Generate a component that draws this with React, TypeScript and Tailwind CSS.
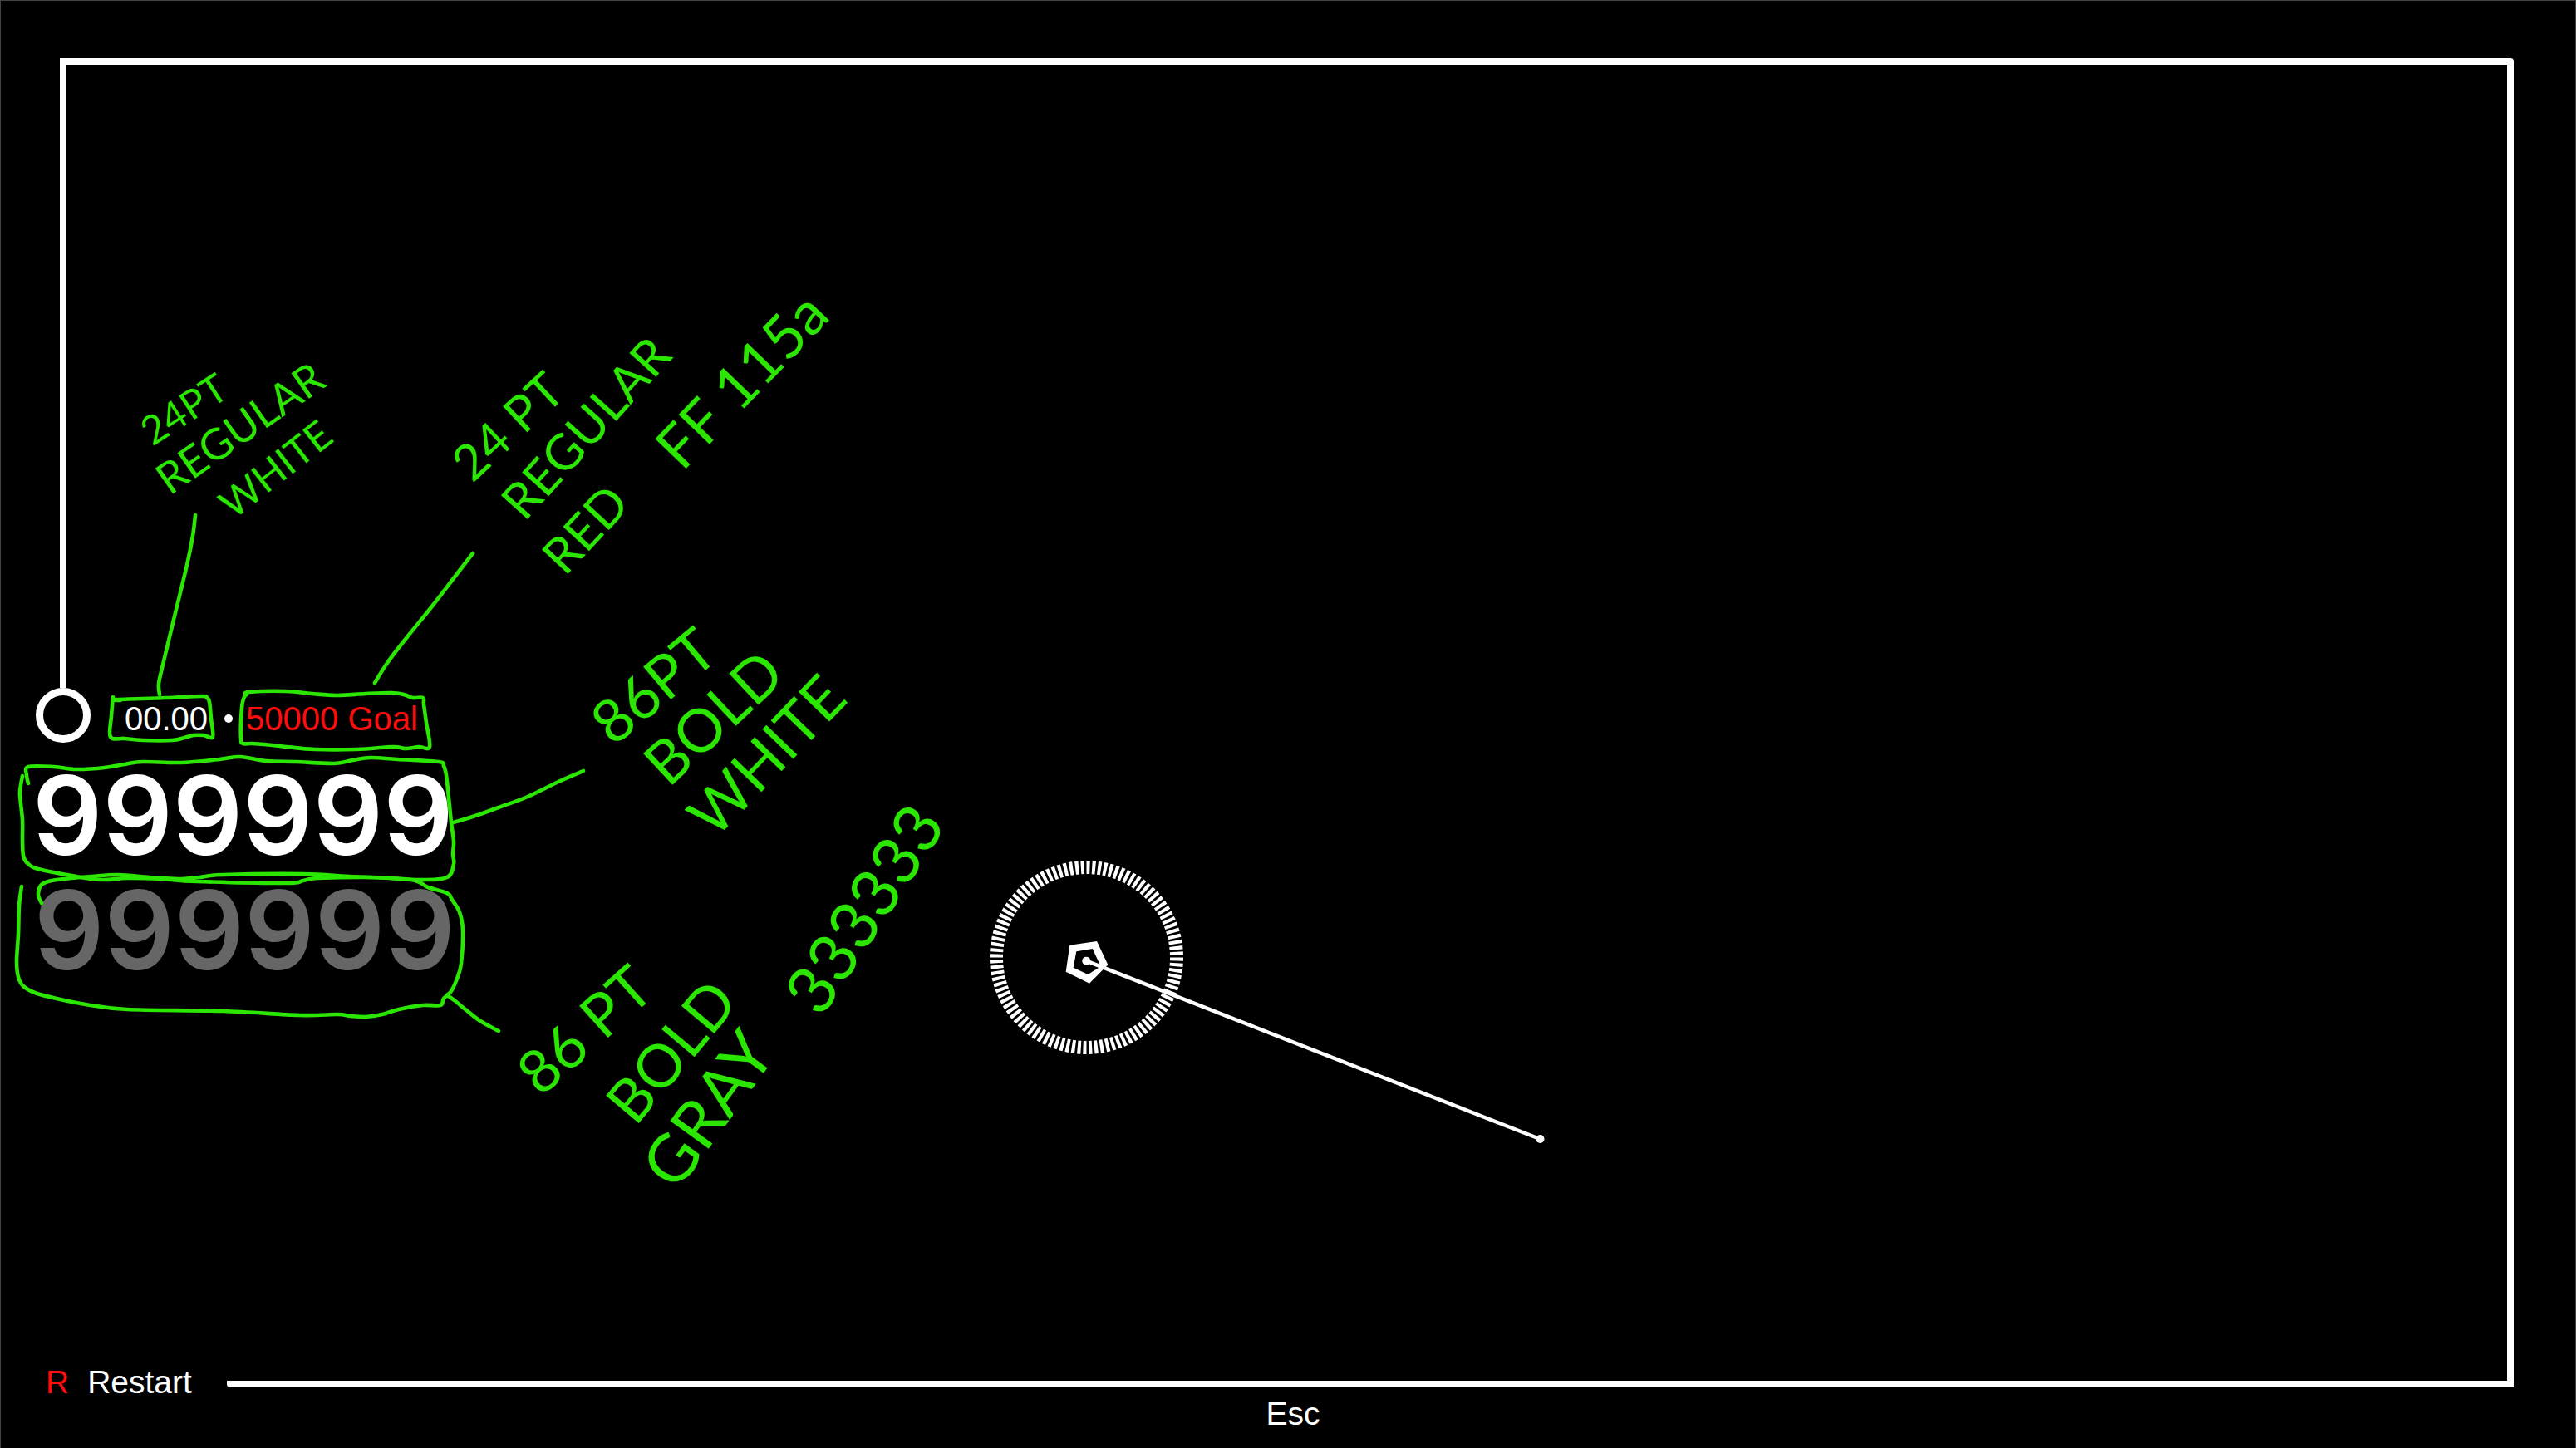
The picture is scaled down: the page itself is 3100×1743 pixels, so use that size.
import React from "react";

type Point = [number, number];

const timerBox: Point[] = [[136, 839], [134, 862], [133, 887], [150, 889], [172, 891], [207, 891], [222, 888], [233, 885], [245, 885], [256, 887], [254, 865], [252, 845], [249, 840], [243, 838], [199, 840], [140, 842], [145, 843]];
const goalBox: Point[] = [[297, 836], [299, 833], [344, 832], [375, 835], [406, 837], [440, 835], [471, 834], [486, 836], [497, 840], [509, 840], [510, 848], [513, 870], [517, 899], [504, 899], [488, 901], [473, 899], [429, 902], [379, 902], [345, 899], [318, 896], [303, 895], [292, 895], [290, 889], [290, 867], [292, 845], [296, 835]];
const scoreBox: Point[] = [[34, 943], [32, 933], [34, 923], [65, 923], [92, 926], [126, 924], [150, 920], [172, 917], [218, 918], [264, 914], [289, 911], [321, 916], [356, 917], [402, 919], [425, 915], [446, 912], [478, 914], [528, 917], [534, 922], [537, 933], [540, 960], [543, 990], [546, 1013], [545, 1028], [546, 1040], [538, 1056], [505, 1059], [450, 1056], [383, 1057], [365, 1060], [344, 1063], [237, 1061], [195, 1058], [153, 1057], [122, 1059], [92, 1055], [46, 1046], [33, 1039], [28, 1030], [27, 1010], [27, 987], [24, 957], [25, 945], [27, 934]];
const bestBox: Point[] = [[50, 1087], [46, 1077], [49, 1066], [58, 1061], [77, 1058], [110, 1055], [142, 1053], [180, 1056], [214, 1058], [240, 1056], [268, 1053], [364, 1052], [421, 1055], [494, 1059], [515, 1068], [538, 1075], [544, 1083], [553, 1098], [557, 1120], [555, 1160], [550, 1178], [543, 1193], [534, 1202], [530, 1210], [509, 1210], [480, 1215], [460, 1221], [440, 1224], [422, 1223], [406, 1221], [360, 1222], [268, 1217], [153, 1215], [103, 1209], [68, 1202], [42, 1195], [28, 1187], [22, 1176], [20, 1157], [22, 1125], [23, 1090], [26, 1067]];
const leaders: Point[][] = [
  [[235, 620], [232, 645], [225, 680], [208, 750], [196, 800], [191, 823], [192, 836]],
  [[569, 666], [549, 692], [519, 731], [489, 768], [466, 798], [451, 822]],
  [[546, 990], [575, 981], [600, 972], [635, 959], [672, 941], [702, 928]],
  [[538, 1198], [548, 1205], [560, 1215], [578, 1229], [600, 1241]],
];

// Catmull-Rom spline through the pen points, written as cubic Béziers.
function penPath(points: Point[]): string {
  let d = `M${points[0][0]} ${points[0][1]}`;
  for (let i = 0; i < points.length - 1; i++) {
    const a = points[Math.max(i - 1, 0)];
    const b = points[i];
    const c = points[i + 1];
    const e = points[Math.min(i + 2, points.length - 1)];
    d += `C${b[0] + (c[0] - a[0]) / 6} ${b[1] + (c[1] - a[1]) / 6} ${c[0] - (e[0] - b[0]) / 6} ${c[1] - (e[1] - b[1]) / 6} ${c[0]} ${c[1]}`;
  }
  return d;
}

function PenMarks() {
  return (
    <svg
      className="pointer-events-none absolute left-0 top-0 overflow-visible"
      width="720"
      height="1260"
      fill="none"
      stroke="#2ae600"
      strokeWidth="4.6"
      strokeLinecap="round"
      strokeLinejoin="round"
      aria-hidden="true"
    >
      {[timerBox, goalBox, scoreBox, bestBox, ...leaders].map((points, i) => (
        <path key={i} d={penPath(points)} />
      ))}
    </svg>
  );
}

const notes: { text: string; place: string }[] = [
  { text: "24PT", place: "left-[221px] top-[492px] rotate-[-33deg] text-[48px]" },
  { text: "REGULAR", place: "left-[288px] top-[514px] rotate-[-35deg] text-[52px]" },
  { text: "WHITE", place: "left-[331px] top-[564px] rotate-[-38deg] text-[48px]" },
  { text: "24 PT", place: "left-[610px] top-[512px] rotate-[-43deg] text-[60px]" },
  { text: "REGULAR", place: "left-[704px] top-[514px] rotate-[-48deg] text-[60px]" },
  { text: "RED", place: "left-[703px] top-[636px] rotate-[-47deg] text-[60px]" },
  { text: "FF 115a", place: "left-[891px] top-[456px] rotate-[-46deg] text-[72px]" },
  { text: "86PT", place: "left-[785px] top-[824px] rotate-[-40deg] text-[72px]" },
  { text: "BOLD", place: "left-[857px] top-[862px] rotate-[-43deg] text-[72px]" },
  { text: "WHITE", place: "left-[921px] top-[908px] rotate-[-46deg] text-[72px]" },
  { text: "86 PT", place: "left-[702px] top-[1238px] rotate-[-42deg] text-[72px]" },
  { text: "BOLD", place: "left-[806px] top-[1264px] rotate-[-50deg] text-[72px]" },
  { text: "GRAY", place: "left-[850px] top-[1334px] rotate-[-54deg] text-[80px]" },
  { text: "333333", place: "left-[1038px] top-[1093px] rotate-[-57deg] text-[80px]" },
];

function Notes() {
  return (
    <div className="font-['Lato',sans-serif] leading-none text-[#2ae600]">
      {notes.map((note, i) => (
        <span key={i} className={`absolute -translate-x-1/2 -translate-y-1/2 whitespace-nowrap ${note.place}`}>
          {note.text}
        </span>
      ))}
    </div>
  );
}

function Aim() {
  return (
    <svg
      className="pointer-events-none absolute left-[1180px] top-[1020px]"
      width="700"
      height="370"
      fill="none"
      stroke="#fff"
      aria-hidden="true"
    >
      <circle cx="127.5" cy="132.5" r="108.5" strokeWidth="16" pathLength="400" strokeDasharray="2.4 1.6" />
      <path
        d="M107.3 117.7 140 113l13.3 28.3-22.3 22.4-28.3-14zM115.3 125.3l-3.6 19.4 17.6 8.3 15.4-9.7-10-21.3z"
        fill="#fff"
        stroke="none"
        fillRule="evenodd"
      />
      <path d="M127.3 136.7 673 351" strokeWidth="4.5" />
      <circle cx="127.3" cy="136.7" r="5" fill="#fff" stroke="none" />
      <circle cx="673.5" cy="351" r="5" fill="#fff" stroke="none" />
    </svg>
  );
}

function Hud() {
  return (
    <section className="flex flex-col" aria-label="Score">
      <div className="ml-[72px] h-[750px] w-2 bg-white" />
      <div className="flex items-center pl-[43px] text-[40px] leading-none">
        <div className="size-[66px] rounded-full border-[9px] border-white" />
        <p className="ml-[41px] pt-2">00.00</p>
        <span className="ml-[20px] mt-2 size-[10px] rounded-full bg-white" />
        <p className="ml-[16px] pt-2 text-[#ff0d0d]">50000 Goal</p>
      </div>
      <div className="mt-[18px] pl-[39px] font-['Inter',sans-serif] text-[132px] font-semibold leading-[138px]">
        <p>999999</p>
        <p className="pl-0.5 text-[#666666]">999999</p>
      </div>
    </section>
  );
}

export default function App() {
  return (
    <main className="relative flex min-h-screen flex-col overflow-hidden bg-black font-['Liberation_Sans',sans-serif] text-white shadow-[inset_1px_1px_0_#444444,inset_-1px_0_0_#444444]">
      <div className="ml-[72px] mr-[75px] mt-[70px] h-2 rounded-tr bg-white" />
      <div className="flex flex-1 justify-between">
        <Hud />
        <div className="mr-[75px] w-2 bg-white" />
      </div>
      <footer className="text-[39px]">
        <div className="flex h-9 items-start">
          <button type="button" className="ml-[55px] flex gap-[22px] leading-[44px]">
            <kbd className="font-['Liberation_Sans',sans-serif] text-[#ff0d0d]">R</kbd>
            <span>Restart</span>
          </button>
          <div className="ml-[42px] mr-[75px] h-7 flex-1 rounded-bl border-b-8 border-r-8 border-white" />
        </div>
        <div className="flex h-[65px] items-start justify-center pl-3">
          <button type="button" className="leading-[48px]">
            Esc
          </button>
        </div>
      </footer>
      <Aim />
      <PenMarks />
      <Notes />
    </main>
  );
}
